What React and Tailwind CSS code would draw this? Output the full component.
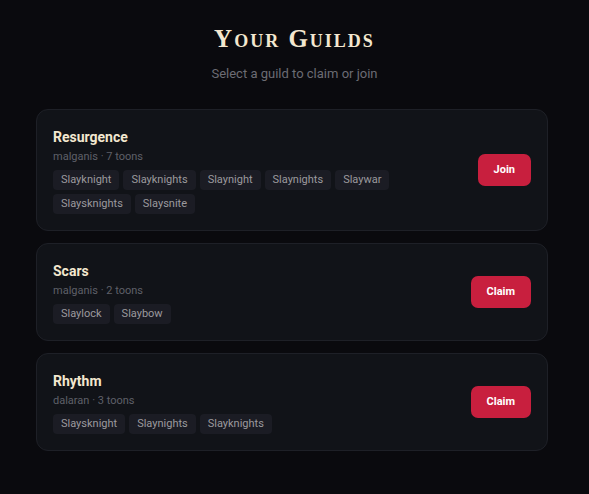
import React from "react";

const guilds = [
  { name: "Resurgence", realm: "malganis", toons: 7, action: "Join", tags: ["Slayknight", "Slayknights", "Slaynight", "Slaynights", "Slaywar", "Slaysknights", "Slaysnite"] },
  { name: "Scars", realm: "malganis", toons: 2, action: "Claim", tags: ["Slaylock", "Slaybow"] },
  { name: "Rhythm", realm: "dalaran", toons: 3, action: "Claim", tags: ["Slaysknight", "Slaynights", "Slayknights"] },
];

export default function App() {
  return (
    <div className="min-h-[494px] w-full bg-[#0a0a0e] font-['Roboto',sans-serif]">
      <div className="flex flex-col items-center pt-[24px]">
        <h1 className="font-['Liberation_Serif',serif] text-[25px] font-bold leading-[30px] tracking-[2px] text-[#f3e7cf] [font-variant:small-caps]">
          Your Guilds
        </h1>
        <p className="mt-[12px] text-[13px] leading-[16px] text-[#6c6c74]">Select a guild to claim or join</p>
      </div>
      <div className="ml-[36px] mt-[27px] flex w-[512px] flex-col gap-[12px]">
        {guilds.map((g) => (
          <div key={g.name} className="flex items-center justify-between rounded-[12px] border border-[#1e2027] bg-[#111318] p-4">
            <div className="flex flex-col">
              <div className="text-[14px] font-bold leading-[22px] text-[#f3e7cf]">{g.name}</div>
              <div className="text-[11px] leading-[18px] text-[#5f6068]">
                {g.realm} · {g.toons} toons
              </div>
              <div className="mt-1 flex max-w-[360px] flex-wrap gap-1">
                {g.tags.map((t) => (
                  <span key={t} className="rounded-[4px] bg-[#1b1c24] px-2 text-[11px] leading-[20px] text-[#9c9a9e]">
                    {t}
                  </span>
                ))}
              </div>
            </div>
            <button className="h-[32px] rounded-[7px] bg-[#c81f3e] px-4 text-[11px] font-bold text-white">{g.action}</button>
          </div>
        ))}
      </div>
    </div>
  );
}
